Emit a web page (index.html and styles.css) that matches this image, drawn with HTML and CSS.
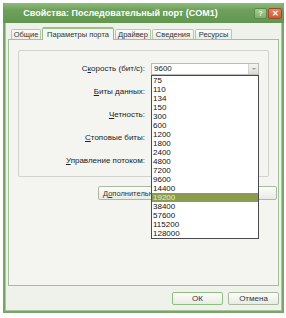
FILE: index.html
```html
<!DOCTYPE html>
<html lang="ru">
<head>
    <meta charset="UTF-8">
    <title>Свойства: Последовательный порт (COM1)</title>
    <link rel="stylesheet" href="styles.css">
</head>
<body>
    <div class="window">
        <div class="titlebar">
            <span class="title">Свойства: Последовательный порт (COM1)</span>
            <div class="caption-btns">
                <span class="cap-btn help">?</span>
                <span class="cap-btn close">✕</span>
            </div>
        </div>

        <div class="content">
            <div class="tabs">
                <div class="tab">Общие</div>
                <div class="tab active">Параметры порта</div>
                <div class="tab">Драйвер</div>
                <div class="tab">Сведения</div>
                <div class="tab">Ресурсы</div>
            </div>

            <div class="panel">
                <div class="group">
                    <div class="row">
                        <label>С<u>к</u>орость (бит/с):</label>
                        <div class="combo open">
                            <span class="combo-value">9600</span>
                            <span class="combo-arrow"></span>
                            <ul class="dropdown">
                                <li>75</li>
                                <li>110</li>
                                <li>134</li>
                                <li>150</li>
                                <li>300</li>
                                <li>600</li>
                                <li>1200</li>
                                <li>1800</li>
                                <li>2400</li>
                                <li>4800</li>
                                <li>7200</li>
                                <li>9600</li>
                                <li>14400</li>
                                <li class="selected">19200</li>
                                <li>38400</li>
                                <li>57600</li>
                                <li>115200</li>
                                <li>128000</li>
                            </ul>
                        </div>
                    </div>
                    <div class="row">
                        <label><u>Б</u>иты данных:</label>
                        <div class="combo"><span class="combo-value"></span><span class="combo-arrow"></span></div>
                    </div>
                    <div class="row">
                        <label><u>Ч</u>етность:</label>
                        <div class="combo"><span class="combo-value"></span><span class="combo-arrow"></span></div>
                    </div>
                    <div class="row">
                        <label><u>С</u>топовые биты:</label>
                        <div class="combo"><span class="combo-value"></span><span class="combo-arrow"></span></div>
                    </div>
                    <div class="row">
                        <label><u>У</u>правление потоком:</label>
                        <div class="combo"><span class="combo-value"></span><span class="combo-arrow"></span></div>
                    </div>
                </div>

                <div class="panel-buttons">
                    <button class="btn btn-advanced">Д<u>о</u>полнительно...</button>
                    <button class="btn btn-restore"></button>
                </div>
            </div>

            <div class="footer">
                <button class="btn btn-ok">ОК</button>
                <button class="btn btn-cancel">Отмена</button>
            </div>
        </div>
    </div>
</body>
</html>
```

FILE: styles.css
```css
* {
    margin: 0;
    padding: 0;
    box-sizing: border-box;
}

body {
    font-family: 'Liberation Sans', Arial, sans-serif;
    font-size: 8px;
    color: #222;
    background: #fff;
}

.window {
    margin: 3px 0 0 3px;
    width: 281px;
    height: 310px;
    background: #eef2ea;
    border: 2px solid #79a56a;
    border-top: none;
    box-shadow: inset 1px 0 0 #a9c59e, inset -1px 0 0 #a9c59e, inset 0 -1px 0 #a9c59e;
}

.titlebar {
    height: 20px;
    margin: 0 -2px;
    display: flex;
    align-items: center;
    background: linear-gradient(#8fbb7a 0%, #6ea05c 35%, #62964f 100%);
    border-radius: 3px 3px 0 0;
}

.title {
    flex: 1;
    text-align: center;
    color: #fff;
    font-size: 9px;
    font-weight: bold;
    padding-right: 24px;
    padding-left: 8px;
    white-space: nowrap;
}

.caption-btns {
    display: flex;
    gap: 1px;
    margin-right: 2px;
}

.cap-btn {
    width: 13px;
    height: 11px;
    display: flex;
    align-items: center;
    justify-content: center;
    font-size: 8px;
    font-weight: bold;
    border-radius: 2px;
    border: 1px solid #5b8b4c;
}

.help {
    background: linear-gradient(#a6cc8f, #7fae6a);
    color: #e8f4dd;
}

.close {
    background: linear-gradient(#e7825d, #cf5a36);
    color: #fff;
    border-color: #9c4a30;
    width: 14px;
}

.content {
    padding: 3px 3px 0 3px;
}

.tabs {
    display: flex;
    align-items: flex-end;
    height: 13px;
    padding-left: 3px;
}

.tab {
    height: 10px;
    line-height: 9px;
    margin-right: 1px;
    border: 1px solid #b4c8ac;
    border-bottom: none;
    border-radius: 2px 2px 0 0;
    background: linear-gradient(#fbfbf8, #eaede4);
    color: #333;
    font-size: 7.5px;
    text-align: center;
    white-space: nowrap;
}

.tab:nth-child(1) { width: 30px; }
.tab:nth-child(2) { width: 72px; }
.tab:nth-child(3) { width: 36px; }
.tab:nth-child(4) { width: 42px; }
.tab:nth-child(5) { width: 37px; }

.tab.active {
    height: 13px;
    line-height: 11px;
    background: #f4f6f0;
    border-color: #9cbb90;
    border-top: 2px solid #9cc08a;
    margin-bottom: -1px;
    position: relative;
}

.panel {
    width: 271px;
    height: 247px;
    border: 1px solid #a3c197;
    background: #f4f5f1;
    padding: 10px 0 0 9px;
}

.group {
    width: 251px;
    height: 127px;
    border: 1px solid #d0d3cc;
    border-radius: 2px;
    padding-top: 6px;
}

.row {
    display: flex;
    align-items: center;
    height: 23px;
}

.row label {
    width: 126px;
    text-align: right;
    margin-right: 6px;
    white-space: nowrap;
}

.combo {
    position: relative;
    width: 108px;
    height: 12px;
    border: 1px solid #b8bcb4;
    background: #fff;
    display: flex;
    align-items: center;
}

.combo-value {
    flex: 1;
    padding-left: 2px;
    font-size: 8px;
}

.combo-arrow {
    width: 10px;
    height: 10px;
    background: linear-gradient(#f4f4f2, #dcdcd8);
    border-left: 1px solid #d2d2ce;
    position: relative;
}

.combo-arrow::after {
    content: "";
    position: absolute;
    left: 3px;
    top: 4px;
    border-left: 2px solid transparent;
    border-right: 2px solid transparent;
    border-top: 2px solid #9a9a96;
}

.dropdown {
    list-style: none;
    position: absolute;
    left: -1px;
    top: 11px;
    width: 108px;
    background: #fff;
    border: 1px solid #4a4a4a;
    z-index: 10;
}

.dropdown li {
    height: 9px;
    line-height: 9px;
    padding-left: 1px;
    font-size: 8px;
    color: #111;
}

.dropdown li.selected {
    background: #8c9c4e;
    color: #e8ecd6;
}

.panel-buttons {
    display: flex;
    gap: 3px;
    margin: 9px 0 0 80px;
}

.btn {
    height: 14px;
    font-family: 'Liberation Sans', Arial, sans-serif;
    font-size: 8px;
    color: #333;
    background: linear-gradient(#fdfdfb, #e9ebe4);
    border: 1px solid #a9b8a0;
    border-radius: 2px;
}

.btn-advanced {
    width: 75px;
    text-align: left;
    padding-left: 4px;
    font-size: 7.5px;
    white-space: nowrap;
}

.btn-restore {
    width: 101px;
}

.footer {
    display: flex;
    justify-content: flex-end;
    gap: 5px;
    margin-top: 6px;
}

.btn-ok,
.btn-cancel {
    width: 51px;
    height: 13px;
}

.btn-ok {
    border-color: #8fbf80;
}
```
